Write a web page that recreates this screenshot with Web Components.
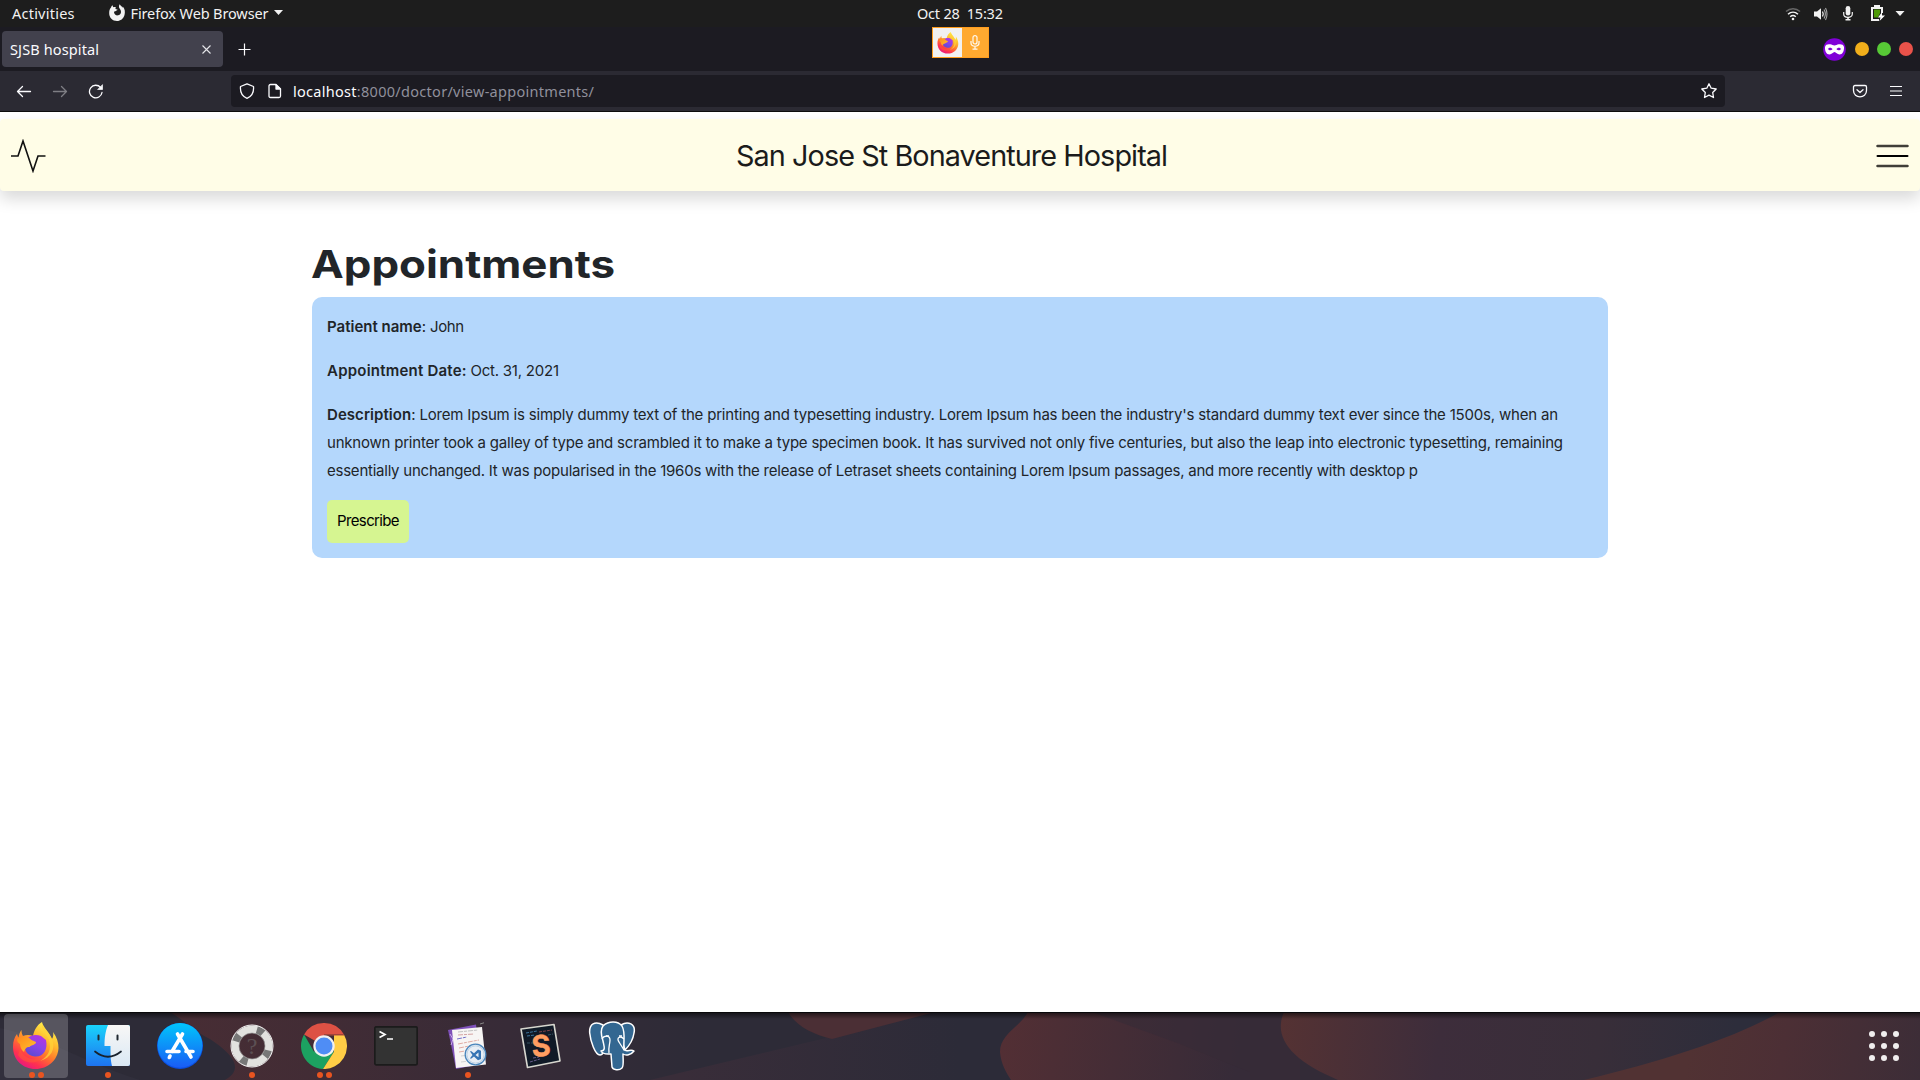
<!DOCTYPE html>
<html lang="en">
<head>
<meta charset="utf-8">
<title>SJSB hospital</title>
<style>
html,body{margin:0;height:100%;overflow:hidden;background:#fff}
</style>
</head>
<body>
<desktop-shell>
  <top-bar slot="top"></top-bar>
  <browser-tabs slot="tabs"></browser-tabs>
  <browser-toolbar slot="toolbar"></browser-toolbar>
  <site-nav slot="page"><fit-text w="432">San Jose St Bonaventure Hospital</fit-text></site-nav>
  <appointment-list slot="page">
    <appointment-card></appointment-card>
  </appointment-list>
  <app-dock slot="dock"></app-dock>
</desktop-shell>
<script>
function element(name, html, setup) {
  customElements.define(name, class extends HTMLElement {
    connectedCallback() {
      if (this.shadowRoot) return;
      const t = document.createElement('template');
      t.innerHTML = html;
      this.attachShadow({mode: 'open'}).appendChild(t.content.cloneNode(true));
      if (setup) setup(this);
    }
  });
}

/* Shared Firefox artwork, 48x48 */
const firefox = id => `<defs>
<linearGradient id="${id}a" x1=".8" y1=".05" x2=".25" y2="1"><stop offset="0" stop-color="#fff44f"/><stop offset=".3" stop-color="#ffbd2e"/><stop offset=".55" stop-color="#ff7a2a"/><stop offset=".8" stop-color="#ff3150"/><stop offset="1" stop-color="#e31587"/></linearGradient>
<linearGradient id="${id}b" x1=".8" y1="0" x2=".3" y2="1"><stop offset="0" stop-color="#b833e1"/><stop offset=".5" stop-color="#8a43e8"/><stop offset="1" stop-color="#5b4bd0"/></linearGradient>
<linearGradient id="${id}c" x1="0" y1="0" x2="1" y2="1"><stop offset="0" stop-color="#ff8a1c"/><stop offset="1" stop-color="#ffc22e"/></linearGradient></defs>
<path fill="url(#${id}a)" d="M30 0C31 5 37 10 40 17C41.500 15 41.500 12 41 10C45 15 46.500 21 46.500 26C46 38 36 47 23.500 47C10.500 47 1 37.500 1 25C1 19 2.500 15 5 12C5.500 14 6 15 6.500 15.500C7 12 8 10 9.500 8C9.500 11 10 12.500 11 14C14 12.500 18 12.500 21 14C22 8 25 3 30 0Z"/>
<path fill="url(#${id}b)" d="M15 17C18 13 24 12 29 14L34 18C36 27 32 35 23 34.500C15 34 11 27 14 22Z"/>
<path fill="url(#${id}c)" d="M5 17C10 13 16 14 19.500 18L24 20C24 23 19 23 17.500 25C14 25 13 27 12 30C9 28 8 24 8 22C6 21 5 19 5 17Z"/>
<path fill="#ffd338" opacity=".75" d="M30 2C29 9 35 12 37 18C40 27 36 35 28 39C39 36 44 27 40 17C37 10 31 6 30 2Z"/>
<path fill="#ff5a36" opacity=".55" d="M8 27C12 37 22 39 30 36C26 42 12 43 6 33Z"/>`;

element('desktop-shell', `<style>
:host{display:flex;flex-direction:column;width:1920px;height:1080px;overflow:hidden;background:#fff;font-family:Inter,"Liberation Sans",sans-serif;color:#212529}
main{flex:1;min-height:0;display:flex;flex-direction:column;padding-top:7px;box-sizing:border-box}
</style><slot name="top"></slot><slot name="tabs"></slot><slot name="toolbar"></slot><main><slot name="page"></slot></main><slot name="dock"></slot>`);

element('top-bar', `<style>
:host{display:grid;grid-template-columns:917px 1fr auto;align-items:center;height:27px;background:#1d1d1d;color:#f2f2f2;font:400 14.5px/24px "Noto Sans",sans-serif;position:relative;z-index:2}
.left,.tray{display:flex;align-items:center}
.left{padding-left:12px}
.left,:host>fit-text{padding-bottom:2px}
.app{display:flex;align-items:center;margin-left:33px}
.app fit-text{margin-left:5px}
.app .arr{margin-left:5px}
svg{display:block}
.tray{padding-right:15px}
capture-pill{position:absolute;left:932px;top:27px}
</style>
<div class="left"><fit-text w="62.500">Activities</fit-text>
<div class="app"><svg width="18" height="18" viewBox="0 0 18 18"><path fill="#f2f2f2" d="M3 3.500C3.500 2 4 1.500 4.500 1.200L5.200 3.200C6 2.800 7 2.800 8 3.300C7.300 4 7.200 4.600 8 5.300L9.500 5.500C9.300 6.500 7.800 6.800 7.300 7.300C6.200 7.100 5.800 8 6.200 9C6.800 11 8.500 11.700 10.200 11.300C12.400 10.700 13.300 9 12.900 7C12.600 5.600 11.700 5 11.200 3.800C10.800 2.700 10.900 1.300 11.800.2C12.300 1.800 13.900 2.200 14.700 3.700L14.800 2.500C17 5 17.300 8 16.500 11C15.500 14.700 12.500 17 9 17C4.500 17 1.200 13.500 1.200 9.500C1.100 7 1.500 5 3 3.500Z"/></svg>
<fit-text w="138">Firefox Web Browser</fit-text><svg class="arr" width="9" height="5" viewBox="0 0 9 5"><path d="M0 0H9L4.500 5Z" fill="#f2f2f2"/></svg></div></div>
<fit-text w="86">Oct 28&nbsp; 15:32</fit-text>
<div class="tray">
<svg width="16" height="14" viewBox="0 0 16 14" fill="none" stroke="#f2f2f2" stroke-width="1.500"><path d="M1 4.500C5 .8 11 .8 15 4.500" opacity=".35"/><path d="M3 7.300C6 4.500 10 4.500 13 7.300"/><path d="M5.200 9.800C7 8.200 9 8.200 10.800 9.800"/><circle cx="8" cy="12" r="1.300" fill="#f2f2f2" stroke="none"/></svg>
<svg style="margin-left:12px" width="16" height="14" viewBox="0 0 16 14"><path fill="#f2f2f2" d="M1 4.500H4L8 1.200V12.800L4 9.500H1Z"/><path d="M9.500 4.500Q11 7 9.500 9.500" fill="none" stroke="#f2f2f2" stroke-width="1.300"/><path d="M11 2.500Q13.700 7 11 11.500M12.500 1Q15.500 7 12.500 13" fill="none" stroke="#f2f2f2" stroke-width="1.100" opacity=".65"/></svg>
<svg style="margin-left:14px" width="10" height="15" viewBox="0 0 10 15"><rect x="2.700" y="0" width="4.600" height="9.500" rx="2.300" fill="#f2f2f2"/><path d="M.7 6V8C.7 12.500 9.300 12.500 9.300 8V6" fill="none" stroke="#f2f2f2" stroke-width="1.200"/><path d="M4.200 11H5.800V13H7.500V14.600H2.500V13H4.200Z" fill="#f2f2f2"/></svg>
<svg style="margin-left:18px" width="15" height="17" viewBox="0 0 15 17"><path fill="#f2f2f2" d="M3 0H9V2H12V8H10V4H2V14H8V16H0V2H3Z"/><path d="M3 4.500H9V8L7 12.500H3Z" fill="#4e9a06"/><path d="M11 7L7 12.500H9.500L8.500 16L14 10.500H11Z" fill="#fff"/></svg>
<svg style="margin-left:9px" width="10" height="5" viewBox="0 0 10 5"><path d="M.5 0H9.500L5 5Z" fill="#f2f2f2"/></svg>
</div><capture-pill></capture-pill>`);

element('capture-pill', `<style>
:host{display:flex;width:57px;height:31px;box-sizing:border-box;border:1px solid #ff9d1e;background:#ffa930}
.app{width:29px;background:#f1f1f1;display:flex;align-items:center;justify-content:center}
.mic{flex:1;display:flex;align-items:center;justify-content:center}
</style><div class="app"><svg width="22" height="22" viewBox="0 0 48 48">${firefox('p')}</svg></div><div class="mic"><svg width="10" height="15" viewBox="0 0 9 15" fill="none" stroke="#fff8ee" stroke-width="1.200"><rect x="2.500" y=".6" width="4" height="8.400" rx="2"/><path d="M.5 6V8C.5 12.300 8.500 12.300 8.500 8V6M4.500 11.500V14M2 14.200H7"/></svg></div>`);

element('browser-tabs', `<style>
:host{display:flex;align-items:center;height:44px;box-sizing:border-box;padding:0 7px 0 2px;background:#1c1b22;font:400 14.5px/36px "Noto Sans",sans-serif;color:#fbfbfe}
.tab{display:flex;align-items:center;justify-content:space-between;width:221px;height:36px;box-sizing:border-box;padding:0 12px 0 8px;border-radius:4px;background:#42414d}
.plus{margin-left:15px}
.win{margin-left:auto;display:flex;align-items:center;gap:8px}
i{width:14px;height:14px;border-radius:50%}
svg{display:block}
</style><div class="tab"><fit-text w="89">SJSB hospital</fit-text><svg width="9" height="9" viewBox="0 0 9 9" stroke="#e6e6ea" stroke-width="1.100"><path d="M.5 .5L8.500 8.500M8.500 .5L.5 8.500"/></svg></div>
<svg class="plus" width="13" height="13" viewBox="0 0 13 13" stroke="#fbfbfe" stroke-width="1.200"><path d="M6.500 .5V12.500M.5 6.500H12.500"/></svg>
<div class="win"><svg style="margin-right:1px" width="23" height="23" viewBox="0 0 23 23"><circle cx="11.500" cy="11.500" r="11.300" fill="#8000d7"/><path fill="#fff" fill-rule="evenodd" d="M2 9C2.500 6.300 5 6 7.300 6.300C9 6.500 10 7.400 11.500 7.400S14 6.500 15.700 6.300C18 6 20.500 6.300 21 9C21.300 13 19.500 16.500 16.500 16.500C14.200 16.500 13 14 11.500 14S8.800 16.500 6.500 16.500C3.500 16.500 1.700 13 2 9ZM5 11C6 9.300 8.700 9.400 9.500 11.300C8.300 12.700 6 12.700 5 11ZM13.500 11.300C14.300 9.400 17 9.300 18 11C17 12.700 14.700 12.700 13.500 11.300Z"/></svg><i style="background:#f1ae1b"></i><i style="background:#57c936"></i><i style="background:#e9524a"></i></div>`);

element('browser-toolbar', `<style>
:host{display:flex;align-items:center;height:41px;box-sizing:border-box;background:#2b2a33;border-bottom:1px solid #0c0c0d;padding:0 18px 0 16px}
.url{display:flex;align-items:center;width:1494px;height:32px;margin-left:127px;box-sizing:border-box;padding:0 8px;border-radius:4px;background:#1c1b22;font:400 14.500px/32px "Noto Sans",sans-serif;color:#90909c}
b{font-weight:400;color:#fbfbfe}
svg{display:block;fill:none;stroke:#fbfbfe;stroke-width:1.300;stroke-linecap:round;stroke-linejoin:round}
.nav{display:flex;gap:20px}.right{margin-left:auto;display:flex;align-items:center;gap:22px}
</style><div class="nav"><svg width="16" height="16" viewBox="0 0 16 16"><path d="M14.500 8.500H1.500M6.500 3.500L1.500 8.500L6.500 13.500"/></svg>
<svg width="16" height="16" viewBox="0 0 16 16" opacity=".4"><path d="M1.500 8.500H14.500M9.500 3.500L14.500 8.500L9.500 13.500"/></svg>
<svg width="16" height="16" viewBox="0 0 16 16"><path d="M14 9.500A6.300 6.300 0 1 1 12.600 4.500"/><path d="M14.500 2V6.500H10Z" fill="#fbfbfe" stroke-width=".7"/></svg></div>
<div class="url"><svg width="16" height="16" viewBox="0 0 16 16"><path d="M8 .8L14.500 3.500C15 9 12.500 13.500 8 15.300C3.500 13.500 1 9 1.500 3.500Z"/></svg>
<svg style="margin:0 10px 0 12px" width="16" height="16" viewBox="0 0 16 16"><path d="M3.500 1.500H8.500L13.500 6V13Q13.500 14.500 12 14.500H3.500Q2 14.500 2 13V3Q2 1.500 3.500 1.500Z"/><path d="M9 1.500V6H13.500Z" fill="#fbfbfe"/></svg>
<fit-text w="301"><b>localhost</b>:8000/doctor/view-appointments/</fit-text>
<svg style="margin-left:auto" width="16" height="16" viewBox="0 0 16 16"><path d="M8 .8L10.200 5.200L15.200 6L11.700 9.500L12.500 14.500L8 12.200L3.500 14.500L4.300 9.500L.8 6L5.800 5.200Z"/></svg></div>
<div class="right"><svg width="16" height="16" viewBox="0 0 16 16"><path d="M3 2.500H13Q14.500 2.500 14.500 4V7.500C14.500 16 1.500 16 1.500 7.500V4Q1.500 2.500 3 2.500ZM5 6.700L8 9.500L11 6.700"/></svg>
<svg width="12" height="12" viewBox="0 0 12 12" style="stroke-linecap:butt;stroke-width:1.200"><path d="M0 1.500H12M0 6H12M0 10.500H12"/></svg></div>`);

element('site-nav', `<style>
:host{display:grid;grid-template-columns:736px 1fr auto;align-items:center;height:72px;box-sizing:border-box;padding-right:11px;background:#fffde7;border-radius:4px;box-shadow:0 8px 16px rgba(0,0,0,.15);font-size:28.800px;line-height:40px;color:#1b1b1b;flex:none}
svg{display:block;margin-top:2px}
slot{display:block;padding-top:2px}
</style><svg style="margin-left:11px" width="36" height="34" viewBox="0 0 36 34"><path d="M0 17H7L12 2L22 32L27 17H34.500" fill="none" stroke="#111" stroke-width="1.600"/></svg><slot></slot><svg width="33" height="24" viewBox="0 0 33 24" stroke-linecap="round" stroke-width="2"><path d="M1.500 2H31.500M1.500 22H31.500" stroke="#403e38" stroke-width="2.500"/><path d="M1.500 12H31.500" stroke="#000"/></svg>`);

element('appointment-list', `<style>
:host{display:flex;flex-direction:column;width:1296px;margin:48px auto 0}
h1{margin:0 0 9px -1px;padding-top:1px;font:700 38.500px/48px Inter,sans-serif;color:#212529}
</style><h1><fit-text w="304" scale>Appointments</fit-text></h1><slot></slot>`);

element('appointment-card', `<style>
:host{display:flex;flex-direction:column;align-items:flex-start;gap:16px;height:261px;box-sizing:border-box;padding:16px 15px 15px;border-radius:10px;background:#b4d7fc;font-size:15px;line-height:28px;color:#212529}
p{margin:0}.line{display:flex;gap:4px}b{font-weight:600}
button{margin-top:-1px;width:82px;height:43px;border:0;border-radius:5px;padding:0 0 1px;background:#d6f591;font:inherit;color:#000}
</style><p class="line"><fit-text w="99">&#8203;<b>Patient name</b>:</fit-text><fit-text w="34">John</fit-text></p>
<p class="line"><fit-text w="139.500"><b>Appointment Date:</b></fit-text><fit-text w="88.500">Oct. 31, 2021</fit-text></p>
<p><span class="line"><fit-text w="88.500"><b>Description</b>:</fit-text><fit-text w="1138.500">Lorem Ipsum is simply dummy text of the printing and typesetting industry. Lorem Ipsum has been the industry's standard dummy text ever since the 1500s, when an</fit-text></span>
<span class="line"><fit-text w="1236">unknown printer took a galley of type and scrambled it to make a type specimen book. It has survived not only five centuries, but also the leap into electronic typesetting, remaining</fit-text></span>
<span class="line"><fit-text w="1091">essentially unchanged. It was popularised in the 1960s with the release of Letraset sheets containing Lorem Ipsum passages, and more recently with desktop p</fit-text></span></p>
<button><fit-text w="62.500">Prescribe</fit-text></button>`.replace('&#8203;', ''));

element('dock-item', `<style>
:host{display:flex;position:relative;width:72px;height:68px;align-items:center;justify-content:center;flex:none}
:host([active])::before{content:"";position:absolute;left:4px;top:2px;width:64px;height:64px;border-radius:4px;background:rgba(255,255,255,.2)}
::slotted(svg){position:relative;display:block}
.dots{position:absolute;left:0;right:0;bottom:2px;display:flex;justify-content:center;gap:3px}
i{width:6px;height:6px;border-radius:50%;background:#e95420}
</style><slot></slot><div class="dots"></div>`, el => {
  el.shadowRoot.querySelector('.dots').innerHTML = '<i></i>'.repeat(+el.getAttribute('windows') || 0);
});

element('app-dock', `<style>
:host{display:flex;align-items:center;justify-content:space-between;position:relative;height:68px;flex:none;overflow:hidden;background:#2d2b37}
.wall{position:absolute;inset:0}
.apps{display:flex;position:relative}
.grid{position:relative;display:grid;grid-template-columns:repeat(3,6px);gap:6px;padding-right:21px}
.grid i{width:6px;height:6px;border-radius:50%;background:#f0eeee}
text{font-family:Inter,sans-serif}
</style>
<svg class="wall" width="1920" height="68" viewBox="0 0 1920 68"><defs>
<linearGradient id="g1" gradientUnits="userSpaceOnUse" x1="170" y1="0" x2="700" y2="0"><stop offset="0" stop-color="#482d34"/><stop offset=".3" stop-color="#412c35"/><stop offset=".6" stop-color="#382b37"/><stop offset="1" stop-color="#2d2b37"/></linearGradient>
<linearGradient id="g2" gradientUnits="userSpaceOnUse" x1="680" y1="0" x2="960" y2="0"><stop offset="0" stop-color="#392d39"/><stop offset="1" stop-color="#2c2b38"/></linearGradient>
<linearGradient id="g3" gradientUnits="userSpaceOnUse" x1="1000" y1="0" x2="1240" y2="30"><stop offset="0" stop-color="#532f34"/><stop offset="1" stop-color="#362b38"/></linearGradient>
<linearGradient id="g4" gradientUnits="userSpaceOnUse" x1="1280" y1="0" x2="1735" y2="40"><stop offset="0" stop-color="#553233"/><stop offset=".35" stop-color="#3d2d3b"/><stop offset=".7" stop-color="#382e39"/><stop offset="1" stop-color="#2d2d3b"/></linearGradient>
<linearGradient id="g5" gradientUnits="userSpaceOnUse" x1="1690" y1="30" x2="1920" y2="68"><stop offset="0" stop-color="#513233"/><stop offset=".4" stop-color="#4c2f35"/><stop offset="1" stop-color="#3c2d37"/></linearGradient>
<linearGradient id="sh" x1="0" y1="0" x2="0" y2="1"><stop offset="0" stop-color="#000" stop-opacity=".6"/><stop offset="1" stop-color="#000" stop-opacity="0"/></linearGradient></defs>
<path d="M170 0H760V68H225C243 58 236 44 210 27C192 18 184 8 170 0Z" fill="url(#g1)"/>
<path d="M0 16C55 28 82 50 140 68H0Z" fill="#312f3c"/>
<path d="M650 68L935 0H1120V68Z" fill="url(#g2)"/>
<path d="M788 0C796 14 812 22 832 27L935 0Z" fill="#4b2f35"/>
<path d="M1028 0C1020 15 1000 22 1000 40C1001 52 1006 60 1011 68H1300V0Z" fill="url(#g3)"/>
<path d="M1092 0L1180 32L1250 60V68H1340V0Z" fill="#372b37" opacity=".6"/>
<path d="M1284 0C1273 25 1290 48 1338 68H1790V0Z" fill="url(#g4)"/>
<path d="M1780 0C1735 26 1660 50 1584 68H1920V0Z" fill="url(#g5)"/>
<rect width="1920" height="7" fill="url(#sh)"/><rect width="1920" height="1" fill="#09090b"/></svg>
<div class="apps">
<dock-item active windows="2"><svg width="48" height="48" viewBox="0 0 48 48">${firefox('d')}</svg></dock-item>
<dock-item windows="1"><svg width="44" height="42" viewBox="0 0 44 42"><defs><linearGradient id="f1" x1="0" y1="0" x2="0" y2="1"><stop offset="0" stop-color="#19d2fb"/><stop offset="1" stop-color="#1e73f0"/></linearGradient><linearGradient id="f2" x1="0" y1="0" x2="0" y2="1"><stop offset="0" stop-color="#f8f7f6"/><stop offset="1" stop-color="#dae8f4"/></linearGradient></defs><rect width="44" height="41" rx="2" fill="url(#f1)"/><path d="M22 0H42Q44 0 44 2V39Q44 41 42 41H26C24.500 35 24.500 30 24.500 21H18.500C18.500 12 19.500 6 22 0Z" fill="url(#f2)"/><path d="M12.500 10.500V14.500M31.500 10.500V14.500" stroke="#202830" stroke-width="2" stroke-linecap="round"/><path d="M9 26.500Q22 37 35 26.500" fill="none" stroke="#18212c" stroke-width="1.700" stroke-linecap="round"/></svg></dock-item>
<dock-item><svg width="46" height="46" viewBox="0 0 46 46"><defs><linearGradient id="s1" x1="0" y1="0" x2="0" y2="1"><stop offset="0" stop-color="#00c6fb"/><stop offset="1" stop-color="#1a5cf5"/></linearGradient></defs><circle cx="23" cy="23" r="23" fill="#0a4fe0"/><circle cx="23" cy="22.400" r="22.400" fill="url(#s1)"/><g stroke="#fff" stroke-width="3.600" stroke-linecap="round" fill="none"><path d="M20.500 11L34 34M25.500 11L15 28.500M10 28.500H22M29 28.500H36M13 33L12.300 34.500"/></g></svg></dock-item>
<dock-item windows="1"><svg width="44" height="44" viewBox="0 0 44 44"><circle cx="22" cy="22" r="16.800" fill="none" stroke="#e2e2df" stroke-width="7.500"/><circle cx="22" cy="22" r="16.800" transform="rotate(15 22 22)" fill="none" stroke="#777" stroke-width="7.500" stroke-dasharray="7 19.390"/><circle cx="22" cy="22" r="21" fill="none" stroke="#f3f3f3"/><circle cx="22" cy="22" r="13" fill="none" stroke="#999" stroke-width=".7"/><text x="22" y="30" text-anchor="middle" font-size="24" style="font-family:'Liberation Serif',serif" fill="#5c5053">?</text></svg></dock-item>
<dock-item windows="2"><svg width="46" height="46" viewBox="0 0 46 46"><path d="M23 23L3.080 11.500A23 23 0 0 1 42.920 11.500H23Z" fill="#dd5144"/><path d="M3.080 11.500A23 23 0 0 0 22 46L33 28.750L23 23L13 28.750Z" fill="#1ca261"/><path d="M42.920 11.500A23 23 0 0 1 22 46L33 28.750L33 12H42.500Z" fill="#ffcd46"/><path d="M23 12.500H43.200L43 11.500H23Z" fill="#b34838"/><circle cx="23" cy="23" r="10.700" fill="#f1f1f1"/><circle cx="23" cy="23" r="8.500" fill="#4f8df5"/></svg></dock-item>
<dock-item><svg width="44" height="40" viewBox="0 0 44 40"><rect x=".8" y=".8" width="42.400" height="38" rx="1.500" fill="#333" stroke="#1b1b1b" stroke-width="1.700"/><path d="M5.500 5.500L11 8.500L5.500 11.500M13 13H19" fill="none" stroke="#fff" stroke-width="1.700"/></svg></dock-item>
<dock-item windows="1"><svg width="42" height="48" viewBox="0 0 42 48"><path d="M1 8L29 2.500L34 42L9 47Z" fill="#7e50b9"/><path d="M3 12L6 17L4 23" stroke="#c9aee8" fill="none"/><path d="M5 8L35 5L39 42.500L9 46Z" fill="#f7f5f4"/><path d="M33 2L37 .8" stroke="#888"/><g stroke-width=".9" stroke-dasharray="5 1 3 1"><path d="M11 10L31 8" stroke="#bbb"/><path d="M11 13L27 12" stroke="#cf9898"/><path d="M10 17L20 15" stroke="#635fc4"/><path d="M11 22L32 18M12 26L32 22M12 30L24 28" stroke="#dda39a"/><path d="M14 34L22 33M14 40L22 39" stroke="#cfcfcf"/></g><circle cx="28.500" cy="32.500" r="10.300" fill="#e8eef5" stroke="#4b87bd" stroke-width="1.300"/><circle cx="28.500" cy="32.500" r="8.600" fill="none" stroke="#9fbdd8" stroke-width=".6"/><path fill="#3674b4" fill-rule="evenodd" d="M23 29.500L24 29L27 31.200L31 27.500L34 28.800V37L31 38.300L27 34.500L24 36.800L23 36.200L25.500 33ZM31.500 30.500L28.500 33L31.500 35.300Z"/></svg></dock-item>
<dock-item><svg width="42" height="46" viewBox="0 0 42 46"><path d="M2 6L35 1.500L41 38L8.500 44.500Z" fill="#101a27" stroke="#d7d7cf" stroke-width="1.600" stroke-linejoin="round"/><g fill="none" stroke-width=".8" stroke-dasharray="3 1"><path d="M7 10L18 8M8 13L16 12" stroke="#468cba"/><path d="M20 9L33 7" stroke="#9c4c52"/><path d="M11 39L21 36M14 35L20 34" stroke="#7a69a2"/><path d="M8 20H14M29 12L34 11" stroke="#3d6070"/></g><text x="22" y="33" text-anchor="middle" font-size="29" font-weight="700" fill="#ff9e61" stroke="#ff9e61" stroke-width=".5" transform="rotate(-4 22 23)">S</text></svg></dock-item>
<dock-item><svg width="48" height="50" viewBox="0 0 48 50"><g fill="#336791" stroke="#fff" stroke-width="1.500" stroke-linejoin="round"><path d="M15 4C7-.5 1 3 1.700 12C2.500 20 7 34 12 34C15 34 16 30 18 27L16 5Z"/><path d="M33 4C40-.5 48 3 46 12C45 19 41 25 37 29L31 10Z"/><path d="M15 5C21-.5 30 0 34 5C38 12 35 21 36 29C39 31 43 28 46 30C43 34 38 35 35 33C35 39 36 45 34 47C31 50 25 49 24 46L23 33C20 33 15 34 13 30C18 30 16 25 15 20C13 14 12 9 15 5Z"/></g><path d="M14 18C16 14 22 14 22 19C22 23 20 27 21 32M36 18C32 14 28 17 31 21L36 29" fill="none" stroke="#fff" stroke-width="1.300"/><path d="M18 15H21M31 15H34" stroke="#fff" stroke-width="1.600"/></svg></dock-item>
</div>
<div class="grid"><i></i><i></i><i></i><i></i><i></i><i></i><i></i><i></i><i></i></div>`);

/* Text run that occupies exactly `w` pixels, by tracking or, with `scale`, by stretching. */
element('fit-text', `<style>
:host{display:block;white-space:nowrap;flex:none}
span{display:inline-block;transform-origin:0 50%}
</style><span><slot></slot></span>`, el => {
  const span = el.shadowRoot.querySelector('span');
  const w = parseFloat(el.getAttribute('w'));
  const natural = span.getBoundingClientRect().width;
  el.style.width = w + 'px';
  if (el.hasAttribute('scale')) span.style.transform = `scaleX(${w / natural})`;
  else el.style.letterSpacing = (w - natural) / (el.textContent.length - 1) + 'px';
  if (el.parentNode && el.parentNode.localName === 'button') el.style.margin = '0 auto';
});
</script>
</body>
</html>
